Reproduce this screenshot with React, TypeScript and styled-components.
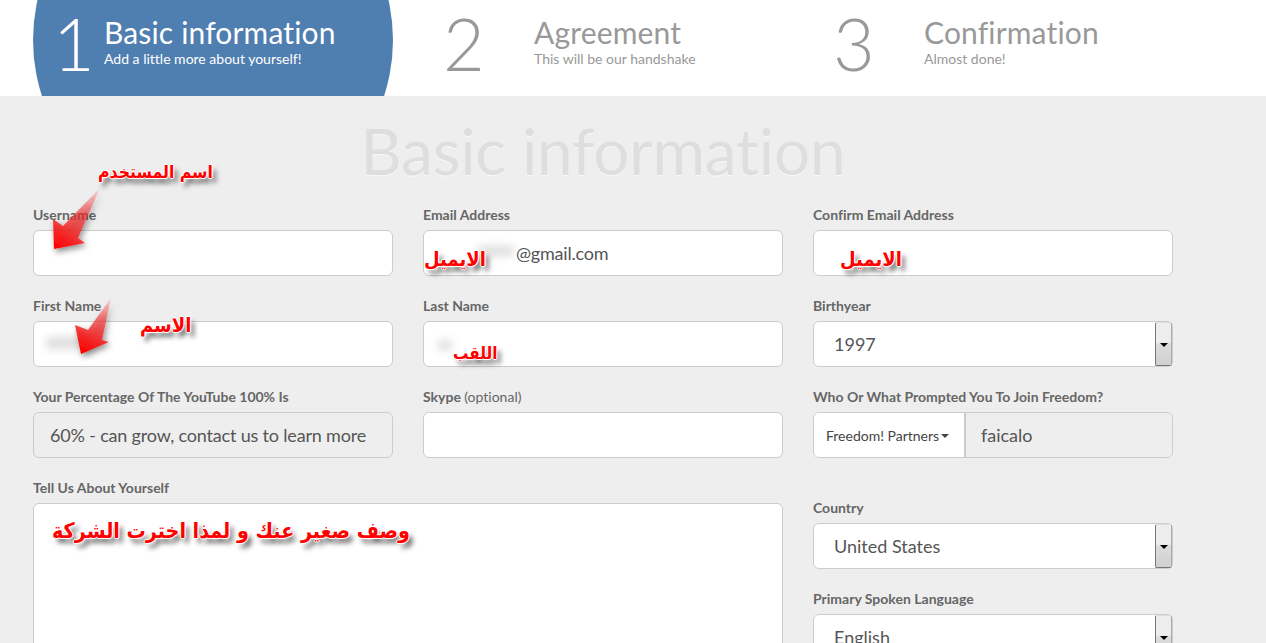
import React from 'react';
import styled, { createGlobalStyle } from 'styled-components';

const GlobalStyle = createGlobalStyle`
  html, body {
    margin: 0;
    padding: 0;
    background: #eee;
    font-family: 'Lato', 'Liberation Sans', sans-serif;
    font-variant-ligatures: none;
  }
`;

const Page = styled.div`
  position: relative;
  width: 1266px;
  height: 643px;
  overflow: hidden;
  background: #eee;
`;

const StepBar = styled.div`
  display: grid;
  grid-template-columns: repeat(3, 360px);
  column-gap: 30px;
  height: 96px;
  padding-left: 33px;
  background: #fff;
  overflow: hidden;
`;

const Step = styled.div<{ $active?: boolean }>`
  position: relative;
  display: flex;
  align-items: flex-start;
  padding-left: 20px;
  color: ${(props) => (props.$active ? '#fff' : '#999')};

  &::before {
    content: '';
    display: ${(props) => (props.$active ? 'block' : 'none')};
    position: absolute;
    left: 0;
    top: -140px;
    width: 360px;
    height: 360px;
    border-radius: 50%;
    background: #4f7eb1;
  }
`;

const StepNumber = styled.div<{ $active?: boolean }>`
  position: relative;
  width: ${(props) => (props.$active ? '51px' : '91px')};
  flex: none;
  font-size: 72px;
  font-weight: 300;
  line-height: 87px;
`;

const StepText = styled.div`
  position: relative;
  padding-top: 13px;
`;

const StepTitle = styled.div`
  font-size: 30px;
  line-height: 38px;
  letter-spacing: 0.15px;
`;

const StepHint = styled.div`
  font-size: 14px;
  line-height: 16px;
`;

const Heading = styled.h1`
  margin: 0 0 0 33px;
  width: 1140px;
  height: 109px;
  padding-top: 20px;
  box-sizing: border-box;
  text-align: center;
  font-size: 64px;
  font-weight: 400;
  line-height: 70px;
  letter-spacing: -0.2px;
  color: #dedede;
  text-shadow: 0 1px 0 #f8f8f8;
`;

const FormGrid = styled.form`
  display: grid;
  grid-template-columns: repeat(3, 360px);
  column-gap: 30px;
  padding-left: 33px;
`;

const Field = styled.div`
  display: flex;
  flex-direction: column;
  margin-bottom: 20px;
`;

const WideField = styled(Field)`
  grid-column: span 2;
`;

const SideColumn = styled.div`
  padding-top: 20px;
`;

const Label = styled.label`
  height: 20px;
  margin-bottom: 5px;
  font-size: 14px;
  font-weight: 700;
  line-height: 20px;
  color: #666;
`;

const Optional = styled.span`
  font-weight: 400;
`;

const Input = styled.div<{ $disabled?: boolean }>`
  position: relative;
  display: flex;
  align-items: center;
  box-sizing: border-box;
  height: 46px;
  padding: 0 ${(props) => (props.$disabled ? '16px' : '20px')};
  border: 1px solid #ccc;
  border-radius: 6px;
  background: ${(props) => (props.$disabled ? '#eee' : '#fff')};
  font-size: 18px;
  letter-spacing: ${(props) => (props.$disabled ? '-0.18px' : '0')};
  color: #555;
  white-space: nowrap;
`;

const EmailValue = styled.span`
  margin-left: 72px;
  letter-spacing: -0.2px;
`;

const SelectButton = styled.div`
  position: absolute;
  right: 0;
  top: 0;
  bottom: 0;
  width: 17px;
  box-sizing: border-box;
  border-width: 1px;
  border-style: solid;
  border-color: #ddd #aaa #777 #777;
  border-radius: 2px;
  background: linear-gradient(#ededed 0%, #ededed 45%, #dcdcdc 50%, #d0d0d0 100%);

  &::after {
    content: '';
    position: absolute;
    left: 4px;
    top: 20px;
    border-left: 4px solid transparent;
    border-right: 4px solid transparent;
    border-top: 4px solid #000;
  }
`;

const TextArea = styled(Input)`
  height: 300px;
`;

const AddOn = styled.div`
  display: flex;
  box-sizing: border-box;
  height: 46px;
  border: 1px solid #ccc;
  border-radius: 6px;
  overflow: hidden;
`;

const AddOnButton = styled.div`
  display: flex;
  align-items: center;
  gap: 2px;
  width: 152px;
  box-sizing: border-box;
  padding-left: 12px;
  border-right: 2px solid #ccc;
  background: #fff;
  font-size: 14px;
  white-space: nowrap;
  color: #444;

  &::after {
    content: '';
    margin-top: 1px;
    border-left: 4px solid transparent;
    border-right: 4px solid transparent;
    border-top: 4px solid #444;
  }
`;

const AddOnValue = styled.div`
  display: flex;
  flex: 1;
  align-items: center;
  padding-left: 15px;
  background: #eee;
  font-size: 18px;
  color: #555;
`;

const Note = styled.div<{ $x: number; $y: number; $size?: number }>`
  position: absolute;
  left: ${(props) => props.$x}px;
  top: ${(props) => props.$y}px;
  direction: rtl;
  white-space: nowrap;
  font-family: 'DejaVu Sans Condensed', 'DejaVu Sans', sans-serif;
  font-size: ${(props) => props.$size ?? 20}px;
  font-weight: 700;
  line-height: 30px;
  color: #f00;
  text-shadow:
    1px 0 0 #fff, -1px 0 0 #fff, 0 1px 0 #fff, 0 -1px 0 #fff,
    4px 5px 5px rgba(0, 0, 0, 0.6);
`;

const Smudge = styled.div<{ $x: number; $y: number; $w: number; $h: number }>`
  position: absolute;
  left: ${(props) => props.$x}px;
  top: ${(props) => props.$y}px;
  width: ${(props) => props.$w}px;
  height: ${(props) => props.$h}px;
  border-radius: 4px;
  background: #bbb;
  filter: blur(4px);
  opacity: 0.5;
`;

const ArrowLayer = styled.svg`
  position: absolute;
  left: 0;
  top: 0;
`;

const Arrows = () => (
  <ArrowLayer width="1266" height="643" viewBox="0 0 1266 643">
    <defs>
      <linearGradient id="arrowA" gradientUnits="userSpaceOnUse" x1="100" y1="188" x2="56" y2="248">
        <stop offset="0" stopColor="#f00" stopOpacity="0.05" />
        <stop offset="0.55" stopColor="#e33" stopOpacity="0.75" />
        <stop offset="1" stopColor="#f00" />
      </linearGradient>
      <linearGradient id="arrowB" gradientUnits="userSpaceOnUse" x1="111" y1="298" x2="84" y2="352">
        <stop offset="0" stopColor="#f00" stopOpacity="0.05" />
        <stop offset="0.55" stopColor="#e33" stopOpacity="0.8" />
        <stop offset="1" stopColor="#f00" />
      </linearGradient>
      <filter id="arrowShadow" x="-30%" y="-30%" width="170%" height="170%">
        <feDropShadow dx="2" dy="3" stdDeviation="3" floodColor="#000" floodOpacity="0.5" />
      </filter>
    </defs>
    <polygon points="100,188 78,238 85,243 54,249 53,219 63,226" fill="url(#arrowA)" filter="url(#arrowShadow)" />
    <polygon points="111,298 102,340 109,342 81,354 75,325 88,330" fill="url(#arrowB)" filter="url(#arrowShadow)" />
  </ArrowLayer>
);

const App: React.FC = () => (
  <Page>
    <GlobalStyle />
    <StepBar>
      <Step $active>
        <StepNumber $active>1</StepNumber>
        <StepText>
          <StepTitle>Basic information</StepTitle>
          <StepHint>Add a little more about yourself!</StepHint>
        </StepText>
      </Step>
      <Step>
        <StepNumber>2</StepNumber>
        <StepText>
          <StepTitle>Agreement</StepTitle>
          <StepHint>This will be our handshake</StepHint>
        </StepText>
      </Step>
      <Step>
        <StepNumber>3</StepNumber>
        <StepText>
          <StepTitle>Confirmation</StepTitle>
          <StepHint>Almost done!</StepHint>
        </StepText>
      </Step>
    </StepBar>

    <Heading>Basic information</Heading>

    <FormGrid>
      <Field>
        <Label>Username</Label>
        <Input />
      </Field>
      <Field>
        <Label>Email Address</Label>
        <Input>
          <EmailValue>@gmail.com</EmailValue>
        </Input>
      </Field>
      <Field>
        <Label>Confirm Email Address</Label>
        <Input />
      </Field>

      <Field>
        <Label>First Name</Label>
        <Input />
      </Field>
      <Field>
        <Label>Last Name</Label>
        <Input />
      </Field>
      <Field>
        <Label>Birthyear</Label>
        <Input>
          1997
          <SelectButton />
        </Input>
      </Field>

      <Field>
        <Label>Your Percentage Of The YouTube 100% Is</Label>
        <Input $disabled>60% - can grow, contact us to learn more</Input>
      </Field>
      <Field>
        <Label>
          Skype <Optional>(optional)</Optional>
        </Label>
        <Input />
      </Field>
      <Field>
        <Label>Who Or What Prompted You To Join Freedom?</Label>
        <AddOn>
          <AddOnButton>Freedom! Partners</AddOnButton>
          <AddOnValue>faicalo</AddOnValue>
        </AddOn>
      </Field>

      <WideField>
        <Label>Tell Us About Yourself</Label>
        <TextArea />
      </WideField>
      <SideColumn>
        <Field>
          <Label>Country</Label>
          <Input>
            United States
            <SelectButton />
          </Input>
        </Field>
        <Field>
          <Label>Primary Spoken Language</Label>
          <Input>
            English
            <SelectButton />
          </Input>
        </Field>
      </SideColumn>
    </FormGrid>

    <Smudge $x={46} $y={337} $w={44} $h={12} />
    <Smudge $x={478} $y={246} $w={36} $h={10} />
    <Smudge $x={438} $y={340} $w={14} $h={10} />

    <Arrows />

    <Note $x={98} $y={157} $size={17.5}>اسم المستخدم</Note>
    <Note $x={140} $y={310}>الاسم</Note>
    <Note $x={424} $y={244}>الايميل</Note>
    <Note $x={453} $y={338} $size={17}>اللقب</Note>
    <Note $x={840} $y={244}>الايميل</Note>
    <Note $x={52} $y={516} $size={21.3}>وصف صغير عنك و لمذا اخترت الشركة</Note>
  </Page>
);

export default App;
